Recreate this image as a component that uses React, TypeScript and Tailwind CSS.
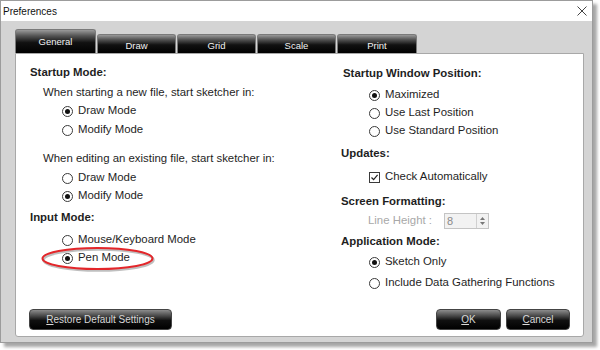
import React from "react";

function Radio({ checked }: { checked?: boolean }) {
  return (
    <span className="w-[11px] h-[11px] rounded-full border border-[#3a3a3a] bg-white flex items-center justify-center shrink-0">
      {checked && <span className="w-[5px] h-[5px] rounded-full bg-[#111]" />}
    </span>
  );
}

function Checkbox({ checked }: { checked?: boolean }) {
  return (
    <span className="w-[11px] h-[11px] border border-[#3a3a3a] bg-white flex items-center justify-center shrink-0">
      {checked && (
        <svg width="9" height="9" viewBox="0 0 9 9">
          <path d="M1.5 4.5 L3.6 6.6 L7.6 1.8" fill="none" stroke="#222" strokeWidth="1.2" />
        </svg>
      )}
    </span>
  );
}

function RadioRow({ label, checked, className = "" }: { label: string; checked?: boolean; className?: string }) {
  return (
    <div className={"flex items-center h-[18px] gap-[5px] " + className}>
      <Radio checked={checked} />
      <span>{label}</span>
    </div>
  );
}

function Tab({ label, active, w }: { label: string; active?: boolean; w: string }) {
  return (
    <div
      className={
        "flex justify-center rounded-t-[3px] border border-b-0 border-[#7a7a7a] bg-[linear-gradient(to_bottom,#9a9a9a_0%,#555_25%,#111_55%,#000_100%)] text-[#f2f2f2] text-[9.5px] " +
        w +
        (active ? " h-[24px] pt-[5px]" : " h-[19px] pt-[4px]")
      }
    >
      {label}
    </div>
  );
}

function Btn({ children, w }: { children: React.ReactNode; w: string }) {
  return (
    <div
      className={
        "h-[21px] rounded-[4px] border border-[#444] bg-[linear-gradient(to_bottom,#8c8c8c_0%,#4a4a4a_30%,#101010_55%,#000_100%)] flex items-center justify-center text-[10px] text-[#d8d8d8] " +
        w
      }
    >
      {children}
    </div>
  );
}

export default function App() {
  return (
    <div className="w-[600px] h-[350px] bg-white font-['Liberation_Sans',Arial,sans-serif] text-[#1e1e1e] overflow-hidden">
      <div className="w-[593px] h-[343px] border border-[#9c9c9c] bg-[#d4d4d4] flex flex-col shadow-[4px_4px_3px_rgba(0,0,0,0.35)]">
        {/* Title bar */}
        <div className="h-[20px] bg-white flex items-center justify-between pl-[2px] pr-[5px] shrink-0">
          <span className="text-[10px] text-[#111]">Preferences</span>
          <svg width="10" height="10" viewBox="0 0 10 10">
            <path d="M0.5 0.5 L9.5 9.5 M9.5 0.5 L0.5 9.5" stroke="#444" strokeWidth="1" />
          </svg>
        </div>

        {/* Tabs */}
        <div className="flex items-end gap-[1px] ml-[14px] mt-[8px] h-[24px] shrink-0">
          <Tab label="General" active w="w-[81px]" />
          <Tab label="Draw" w="w-[79px]" />
          <Tab label="Grid" w="w-[79px]" />
          <Tab label="Scale" w="w-[79px]" />
          <Tab label="Print" w="w-[80px]" />
        </div>

        {/* Panel */}
        <div className="relative ml-[14px] w-[569px] h-[284px] bg-white border border-[#a8a8a8] rounded-b-[3px] flex flex-col text-[11.4px]">
          <div className="flex">
            {/* Left column */}
            <div className="w-[311px] ml-[14px] pt-[10px] flex flex-col">
              <div className="h-[18px] flex items-center font-bold">Startup Mode:</div>
              <div className="h-[18px] flex items-center ml-[13px] mt-[2px]">When starting a new file, start sketcher in:</div>
              <RadioRow className="ml-[32px]" label="Draw Mode" checked />
              <RadioRow className="ml-[32px] mt-[1px]" label="Modify Mode" />
              <div className="h-[18px] flex items-center ml-[13px] mt-[11px]">When editing an existing file, start sketcher in:</div>
              <RadioRow className="ml-[32px] mt-[1px]" label="Draw Mode" />
              <RadioRow className="ml-[32px]" label="Modify Mode" checked />
              <div className="h-[18px] flex items-center font-bold mt-[4px]">Input Mode:</div>
              <RadioRow className="ml-[32px] mt-[4px]" label="Mouse/Keyboard Mode" />
              <RadioRow className="ml-[32px]" label="Pen Mode" checked />
            </div>

            {/* Right column */}
            <div className="flex-1 pt-[11px] flex flex-col">
              <div className="h-[18px] flex items-center font-bold ml-[2px]">Startup Window Position:</div>
              <RadioRow className="ml-[28px] mt-[3px]" label="Maximized" checked />
              <RadioRow className="ml-[28px]" label="Use Last Position" />
              <RadioRow className="ml-[28px]" label="Use Standard Position" />
              <div className="h-[18px] flex items-center font-bold mt-[5px]">Updates:</div>
              <div className="h-[18px] flex items-center gap-[5px] ml-[28px] mt-[5px]">
                <Checkbox checked />
                <span>Check Automatically</span>
              </div>
              <div className="h-[18px] flex items-center font-bold mt-[7px]">Screen Formatting:</div>
              <div className="h-[18px] flex items-start ml-[27px]">
                <span className="leading-[18px] text-[#a8a8a8] w-[76px]">Line Height :</span>
                <div className="mt-[2px] w-[45px] h-[16px] border border-[#c4c4c4] bg-[#f2f2f2] flex">
                  <span className="flex-1 pl-[2px] text-[11px] leading-[14px] text-[#8a8a8a]">8</span>
                  <div className="w-[12px] border-l border-[#d0d0d0] flex flex-col items-center justify-center gap-[2px]">
                    <svg width="5" height="3" viewBox="0 0 5 3"><path d="M0 3 L2.5 0 L5 3 Z" fill="#777" /></svg>
                    <svg width="5" height="3" viewBox="0 0 5 3"><path d="M0 0 L2.5 3 L5 0 Z" fill="#777" /></svg>
                  </div>
                </div>
              </div>
              <div className="h-[18px] flex items-center font-bold mt-[4px]">Application Mode:</div>
              <RadioRow className="ml-[28px] mt-[2px]" label="Sketch Only" checked />
              <RadioRow className="ml-[28px] mt-[3px]" label="Include Data Gathering Functions" />
            </div>
          </div>

          {/* Buttons */}
          <div className="mt-auto mb-[6px] mx-[13px] flex items-center justify-between">
            <Btn w="w-[143px]">
              <span><span className="underline">R</span>estore Default Settings</span>
            </Btn>
            <div className="flex gap-[5px]">
              <Btn w="w-[65px]">
                <span><span className="underline">O</span>K</span>
              </Btn>
              <Btn w="w-[64px]">
                <span><span className="underline">C</span>ancel</span>
              </Btn>
            </div>
          </div>

          {/* Red annotation ellipse */}
          <svg className="absolute left-[21px] top-[189px] pointer-events-none" width="124" height="32" viewBox="0 0 124 32">
            <ellipse cx="61.5" cy="17" rx="55" ry="10.5" fill="none" stroke="rgba(0,0,0,0.25)" strokeWidth="2.5" />
            <ellipse cx="60.5" cy="15.5" rx="55" ry="10.5" fill="none" stroke="#e3262a" strokeWidth="2" />
          </svg>
        </div>
      </div>
    </div>
  );
}
